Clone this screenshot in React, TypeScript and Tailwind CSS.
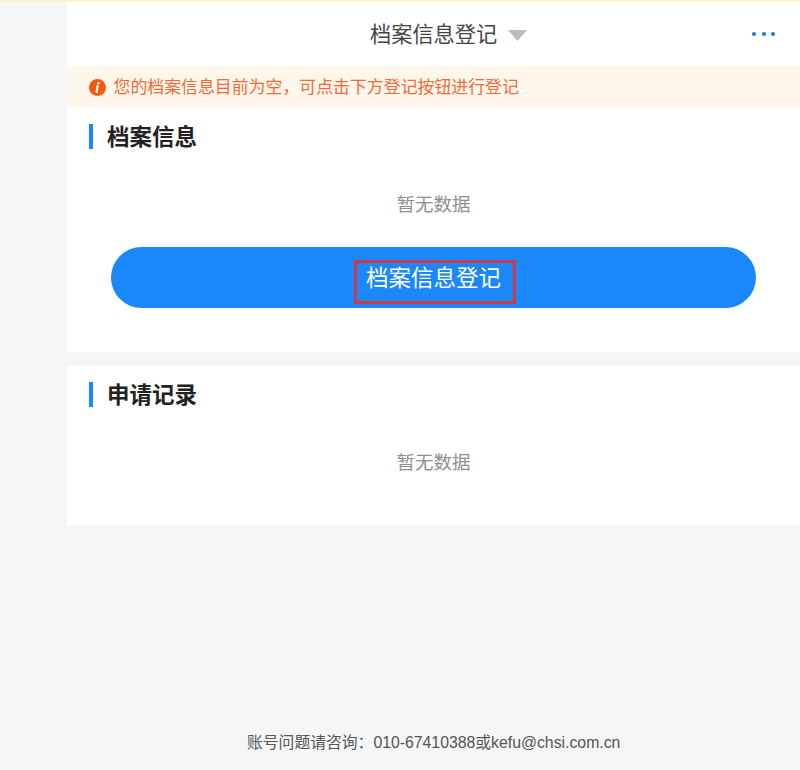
import { Fragment } from "react";

const font = { fontFamily: '"Liberation Sans", "Noto Sans CJK SC", sans-serif' };

function SectionTitle({ children }: { children: string }) {
    return (
        <div className="flex items-start h-[26px]">
            <span className="w-1 h-[25px] bg-[#1e88f5]" />
            <h2 className="ml-[14px] pt-[1px] text-[22.5px] leading-[26px] font-bold text-[#222222]">{children}</h2>
        </div>
    );
}

function Empty() {
    return <p className="text-center text-[18.5px] leading-[26px] text-[#8f8f8f]">暂无数据</p>;
}

export default function App() {
    return (
        <div className="w-[800px] h-[770px] overflow-hidden flex flex-col bg-[#f4f6f8]" style={font}>
            <div className="h-[2px] bg-[#fdf3c9]" />
            <main className="flex-1 ml-[67px] flex flex-col">
                <header className="h-[64px] bg-white flex items-center justify-between pl-[303px] pr-[25px]">
                    <div className="flex items-center">
                        <span className="pt-[2px] text-[21.2px] leading-[30px] text-[#444444]">档案信息登记</span>
                        <svg className="ml-[11px] mt-[2px]" width="19" height="11" viewBox="0 0 19 11">
                            <polygon points="0,0 19,0 9.5,11" fill="#bdbdbd" />
                        </svg>
                    </div>
                    <div className="flex items-center gap-[5.5px]">
                        {[0, 1, 2].map((i) => (
                            <Fragment key={i}>
                                <span className="w-1 h-1 rounded-full bg-[#1e78e6]" />
                            </Fragment>
                        ))}
                    </div>
                </header>

                <div className="h-[42px] bg-[#fff6ec] flex items-center pl-[22px]">
                    <svg width="17" height="17" viewBox="0 0 17 17">
                        <circle cx="8.5" cy="8.5" r="8.5" fill="#f4590f" />
                        <circle cx="9.4" cy="4.2" r="1.3" fill="#fff" />
                        <path d="M8.6 7 L7.6 13" stroke="#fff" strokeWidth="2.2" strokeLinecap="round" />
                    </svg>
                    <span className="ml-[7.5px] pt-[1px] text-[16.9px] leading-[24px] text-[#f26a35]">
                        您的档案信息目前为空，可点击下方登记按钮进行登记
                    </span>
                </div>

                <section className="h-[244px] bg-white pt-4 pl-[22px] mb-[14px]">
                    <SectionTitle>档案信息</SectionTitle>
                    <div className="mt-[42px] pr-[22px]">
                        <Empty />
                    </div>
                    <button className="mt-[29px] ml-[22px] w-[645px] h-[61px] rounded-full bg-[#1a87fb] flex items-center justify-center">
                        <span className="ml-[3px] pl-[9px] pr-[12px] h-[44px] mt-[8px] border-[3px] border-[#cc3a48] flex items-center text-[22.5px] text-white">
                            <span className="-mt-[6px]">档案信息登记</span>
                        </span>
                    </button>
                </section>

                <section className="h-[160px] bg-white pt-4 pl-[22px]">
                    <SectionTitle>申请记录</SectionTitle>
                    <div className="mt-[42px] pr-[22px]">
                        <Empty />
                    </div>
                </section>
            </main>
            <footer className="h-[54px] pl-[247px] pt-[15px] text-[15.8px] leading-[24px] text-[#555555]">
                账号问题请咨询：010-67410388或kefu@chsi.com.cn
            </footer>
        </div>
    );
}
